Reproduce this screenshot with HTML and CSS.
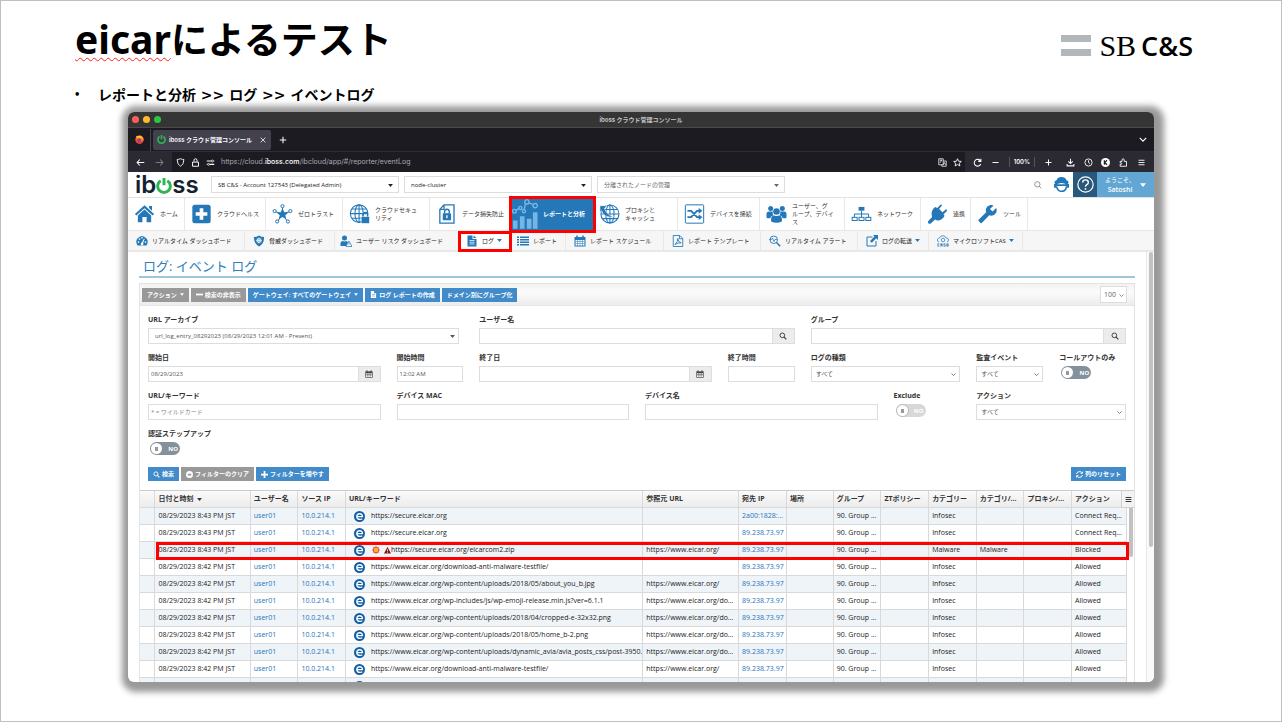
FILE: index.html
```html
<!DOCTYPE html>
<html lang="ja">
<head>
<meta charset="utf-8">
<title>eicarによるテスト</title>
<link rel="stylesheet" href="styles.css">
</head>
<body>
<svg class="sprite" aria-hidden="true">
  <symbol id="home" viewBox="0 0 24 24"><path d="M12 1.500 23.500 12l-1.700 1.900L12 5 2.200 13.900.5 12z"/><path d="M17.500 2.500H21V8l-3.500-3.200zM12 6.600l8 7.200V22h-5.500v-6.500h-5V22H4v-8.200z"/></symbol>
  <symbol id="plus-box" viewBox="0 0 24 24"><rect x="1" y="1" width="22" height="22" rx="3"/><path d="M9.800 5h4.400v4.800H19v4.400h-4.800V19H9.800v-4.800H5V9.800h4.800z" fill="#fff"/></symbol>
  <symbol id="hub" viewBox="0 0 24 24"><path d="M12 4v8M3 9l9 3 9-3M6 21l6-9 6 9" stroke="currentColor" fill="none" stroke-width="1.200"/><path d="m12 5 2.200 4.800 5 .4-3.900 3.300 1.400 5-4.700-2.800-4.700 2.800 1.400-5-3.900-3.300 5-.4z"/><g fill="#fff" stroke="currentColor" stroke-width="1.200"><circle cx="12" cy="2.600" r="1.900"/><circle cx="2.600" cy="8.500" r="1.900"/><circle cx="21.400" cy="8.500" r="1.900"/><circle cx="5.600" cy="21" r="1.900"/><circle cx="18.400" cy="21" r="1.900"/></g></symbol>
  <symbol id="globe-lock" viewBox="0 0 24 24"><g fill="none" stroke="currentColor" stroke-width="1.300"><circle cx="11.500" cy="11.500" r="10.500"/><ellipse cx="11.500" cy="11.500" rx="5" ry="10.500"/><path d="M11.500 1v21M1 11.500h21M2.800 6h17.400M2.800 17h17.400"/></g><rect x="14" y="15" width="10" height="8.500" rx="1" stroke="#fff" stroke-width=".8"/><path d="M16.200 15v-2a2.800 2.800 0 0 1 5.600 0v2" fill="none" stroke="currentColor" stroke-width="1.600"/></symbol>
  <symbol id="doc-lock" viewBox="0 0 24 24"><path d="M9 1h12v22H4V6.500zM9 1v5.500H4" fill="none" stroke="currentColor" stroke-width="1.600"/><rect x="7.500" y="11" width="10" height="8.500" rx="1"/><path d="M9.700 11.500V9a2.800 2.800 0 0 1 5.600 0v2.500" fill="none" stroke="currentColor" stroke-width="1.700"/><rect x="11.700" y="13.500" width="1.600" height="3.500" fill="#fff"/></symbol>
  <symbol id="chart" viewBox="0 0 28 32"><path d="M1 23h5v9H1zM8.500 18.500h5V32h-5zM16 21h5v11h-5zM22.500 14h5v18h-5z"/><g fill="none" stroke="currentColor" stroke-width="1.500"><path d="m4 12 3.700-2M14.500 5l-1.500 6.500M18 4l5 2"/><circle cx="2.500" cy="13" r="2"/><circle cx="9" cy="9.500" r="1.700"/><circle cx="12.800" cy="13" r="1.700"/><circle cx="16" cy="3" r="2.300"/><circle cx="25" cy="7" r="2.300"/></g></symbol>
  <symbol id="globe-arrow" viewBox="0 0 24 24"><g fill="none" stroke="currentColor" stroke-width="1.300"><circle cx="12.500" cy="12" r="10.800"/><ellipse cx="12.500" cy="12" rx="5" ry="10.800"/><path d="M12.500 1v22M2 12h21.500M4 6.500h17.500M4 17.500h17.500"/></g><path d="M.5 2h8.500L6 5.500C8 11 12 14 17 15.500 9 16.500 4 13.500 2.800 8L.5 10z" stroke="#fff" stroke-width=".7"/></symbol>
  <symbol id="shuffle" viewBox="0 0 24 24"><rect x="1" y="1" width="22" height="22" rx="1" fill="none" stroke="currentColor" stroke-width="1.200"/><path d="M3.500 8.200H8l7 7.600h3M3.500 15.800H8l7-7.600h3" fill="none" stroke="currentColor" stroke-width="2.200"/><path d="m17 4.800 4.500 3.400L17 11.600zM17 12.400l4.500 3.400-4.500 3.400z"/></symbol>
  <symbol id="users" viewBox="0 0 24 24"><circle cx="5" cy="5.500" r="3"/><circle cx="19" cy="5.500" r="3"/><circle cx="12" cy="9" r="4"/><path d="M0 16v-4q0-3 3-3h4.500q-.5 3 1 4.500Q5 14 4.500 17H1q-1 0-1-1zM24 16v-4q0-3-3-3h-4.500q.5 3-1 4.500 3.500.5 4 3.500H23q1 0 1-1zM5.500 21v-3q0-4 4-4.300Q12 15.300 14.500 13.700q4 .3 4 4.300v3q-6.500 3-13 0z"/></symbol>
  <symbol id="network" viewBox="0 0 24 24"><rect x="8.500" y="3.500" width="7" height="4.500"/><path d="M12 8v8M3.500 16v-4h17v4" fill="none" stroke="currentColor" stroke-width="1.200"/><g fill="#fff" stroke="currentColor" stroke-width="1.200"><rect x=".8" y="16" width="6" height="3.800"/><rect x="9" y="16" width="6" height="3.800"/><rect x="17.200" y="16" width="6" height="3.800"/></g></symbol>
  <symbol id="plug" viewBox="0 0 24 24"><path d="m8 4.500 2-1 1.500 1.500L15.500.8q1.500-.6 2 .8L14 6l4 4 4.300-3.600q1.600.4 1 2L19.200 12.500l1.300 1.500-1 2-3 2.500q-4 2.500-7.500 0L4 23.300q-2 .7-3.200-.3-.6-1.300.2-2.600l4.500-4.900Q3.500 9 8 4.500z"/></symbol>
  <symbol id="wrench" viewBox="0 0 24 24"><path transform="matrix(-1 0 0 1 24 0)" d="M22.700 19l-9.100-9.100c.9-2.300.4-5-1.500-6.900-2-2-5-2.400-7.400-1.300L9 6 6 9 1.600 4.700C.4 7.100.9 10.100 2.900 12.100c1.900 1.900 4.600 2.400 6.900 1.500l9.100 9.100c.4.4 1 .4 1.400 0l2.300-2.300c.5-.4.5-1.100.1-1.400z"/></symbol>
  <symbol id="gauge" viewBox="0 0 24 24"><path d="M3 21Q-2 13 3 7q4-5 9-5t9 5q5 6 0 14z"/><g fill="#fff"><circle cx="5" cy="14" r="1.700"/><circle cx="7" cy="8" r="1.700"/><circle cx="12" cy="5.500" r="1.700"/><circle cx="19" cy="14" r="1.700"/><path d="m16 7 1.500.7-3.300 8.300a2.700 2.700 0 1 1-2.500-.8z"/></g></symbol>
  <symbol id="shield" viewBox="0 0 24 24"><path d="M12 1q5 3 10 3 1 13-10 19Q1 17 2 4q5 0 10-3z"/><circle cx="12" cy="11" r="4" fill="none" stroke="#fff" stroke-width="1.600"/><path d="M12 5v12M6 11h12M8 7l8 8M16 7l-8 8" stroke="#fff" stroke-width="1.200"/></symbol>
  <symbol id="user-warn" viewBox="0 0 24 24"><circle cx="9" cy="6" r="5"/><path d="M1 22v-5q0-5 5-5 3 2 6 0 3 0 4 3l-4 7z"/><path d="m18 12 6 11H12z" fill="#fff" stroke="currentColor" stroke-width="1.500"/><path d="M17.300 15.500h1.400v4h-1.400z"/></symbol>
  <symbol id="doc" viewBox="0 0 24 24"><path d="M3 1h10v7h8v15H3z"/><path d="M15 1v5h6z"/><path d="M7 11h10M7 14.500h10M7 18h10" stroke="#fff" stroke-width="1.500"/></symbol>
  <symbol id="list" viewBox="0 0 24 24"><path d="M0 3h4v3H0zM6 3h18v3H6zM0 8h4v3H0zM6 8h18v3H6zM0 13h4v3H0zM6 13h18v3H6zM0 18h4v3H0zM6 18h18v3H6z"/></symbol>
  <symbol id="cal" viewBox="0 0 24 24"><path d="M1 4h22v19H1z"/><path d="M6 1v6M18 1v6" stroke="currentColor" stroke-width="3"/><path d="M3 10h4v3H3zM8 10h3.500v3H8zM12.500 10H16v3h-3.500zM17 10h4v3h-4zM3 14h4v3H3zM8 14h3.500v3H8zM12.500 14H16v3h-3.500zM17 14h4v3h-4zM3 18h4v3H3zM8 18h3.500v3H8zM12.500 18H16v3h-3.500zM17 18h4v3h-4z" fill="#fff"/></symbol>
  <symbol id="pdf" viewBox="0 0 24 24"><path d="M2.500 1h13l6 6v16h-19zM15 1v6.500h6.500M6 19q6-5 5.500-12 1 8 7 8.500-6-.5-12.500 3.500" fill="none" stroke="currentColor" stroke-width="1.700"/></symbol>
  <symbol id="find" viewBox="0 0 24 24"><circle cx="9.500" cy="9.500" r="7.500" fill="none" stroke="currentColor" stroke-width="1.800"/><path d="m15 15 7.500 7.500" stroke="currentColor" stroke-width="3"/><path d="M0 9h5l2-3 3 7 2-4h4" fill="none" stroke="currentColor" stroke-width="1.500"/></symbol>
  <symbol id="export" viewBox="0 0 24 24"><path d="M13 4H2v18h18V12" fill="none" stroke="currentColor" stroke-width="2"/><path d="M14 0h10v10l-3.500-3.500-9 9L8 12l9-9z"/></symbol>
  <symbol id="casb" viewBox="0 0 24 24"><path d="M4 14q-4-1-3-5 1-3 4-3 2-5 7-4.500Q17 1.500 18 6q5 0 5 4 0 3-3 4" fill="none" stroke="currentColor" stroke-width="1.500"/><circle cx="12" cy="10" r="3.500" fill="none" stroke="currentColor" stroke-width="1.500"/><path d="M1 17h4v1.500H2.500v3H5V23H1zM7 17h4v6H9.500v-2h-1v2H7zM13 17h4v1.500h-2.500v1H17V23h-4v-1.500h2.500v-1H13zM19 17h4v6h-4zM20.500 18.300v1h1v-1zM20.500 20.500v1h1v-1z" fill-rule="evenodd"/></symbol>
  <symbol id="search" viewBox="0 0 24 24"><circle cx="10" cy="10" r="7" fill="none" stroke="currentColor" stroke-width="3"/><path d="m15 15 7 7" stroke="currentColor" stroke-width="3.500"/></symbol>
  <symbol id="caret" viewBox="0 0 8 5"><path d="M0 0h8L4 5z"/></symbol>
  <symbol id="chev" viewBox="0 0 10 6"><path d="m1 1 4 4 4-4" fill="none" stroke="currentColor" stroke-width="1.500"/></symbol>
  <symbol id="power" viewBox="0 0 24 24"><path d="M7 4.200a9.500 9.500 0 1 0 10 0M12 0v11" fill="none" stroke="currentColor" stroke-width="4.400"/></symbol>
  <symbol id="edge" viewBox="0 0 24 24"><circle cx="12" cy="12" r="12" fill="#0f5ea5"/><path d="M6 12.500h12.500Q18.500 6 12.300 6 6 6 6 12.500 6.500 18.500 13 18.500q3 0 5-1.500" fill="none" stroke="#fff" stroke-width="2.800"/></symbol>
  <symbol id="agent" viewBox="0 0 24 24"><path d="M1 10q-1-4 3-5 2-5 8-5t8 5q4 1 3 5l-2 2q-9-5-18 0z"/><path d="M4 13h16q-1-6-8-6.500Q5 7 4 13zm0 2q2 8 8 8 7 0 8-8" fill="none" stroke="currentColor" stroke-width="2.500"/><path d="M0 11h4v6H0zM20 11h4v6h-4z"/></symbol>
</svg>

<main class="slide">
  <header class="slide-head">
    <h1 class="title"><span class="misspelt">eicar</span>によるテスト</h1>
    <div class="brand"><span class="brand-bars"></span><span class="brand-serif">SB</span><span class="brand-sans">C&amp;S</span></div>
  </header>
  <ul class="points"><li>レポートと分析 &gt;&gt; ログ &gt;&gt; イベントログ</li></ul>

  <section class="window">
    <div class="titlebar"><span class="dots"><i class="dot red"></i><i class="dot amber"></i><i class="dot green"></i></span><span>iboss クラウド管理コンソール</span></div>
    <div class="tabs">
      <span class="fox"><svg viewBox="0 0 24 24"><circle cx="12" cy="12.500" r="11" fill="#ff7a1a"/><path d="M2 6q3-5 4-4 5 1 7-1 9 4 10 12-4-6-9-6z" fill="#ffca28"/><path d="M3 16q4 8 12 7 7-2 8-9-5 5-8 3 0-7-6-8-6 1-6 7z" fill="#e8304a"/><circle cx="12" cy="13" r="4" fill="#7541c9"/></svg></span>
      <div class="tab"><svg class="tab-icon"><use href="#power"/></svg><span>iboss クラウド管理コンソール</span><button class="bare" aria-label="閉じる"><svg viewBox="0 0 10 10"><path d="m2 2 6 6M8 2 2 8" stroke="currentColor"/></svg></button></div>
      <button class="bare new-tab" aria-label="新しいタブ"><svg viewBox="0 0 10 10"><path d="M5 1v8M1 5h8" stroke="currentColor" stroke-width="1.300"/></svg></button>
      <button class="bare tab-list" aria-label="タブ一覧"><svg><use href="#chev"/></svg></button>
    </div>
    <div class="toolbar">
      <div class="back"><button class="bare" aria-label="戻る"><svg viewBox="0 0 12 12"><path d="M11 6H1.500M5 2 1.500 6 5 10" fill="none" stroke="currentColor" stroke-width="1.400"/></svg></button><button class="bare dim" aria-label="進む"><svg viewBox="0 0 12 12"><path d="M1 6h9.500M7 2l3.500 4L7 10" fill="none" stroke="currentColor" stroke-width="1.400"/></svg></button></div>
      <div class="urlbar">
        <svg viewBox="0 0 12 12"><path d="M6 1q2.500 1 4.500 1 0 7-4.500 9-4.500-2-4.500-9 2 0 4.500-1z" fill="none" stroke="currentColor" stroke-width="1.200"/></svg>
        <svg viewBox="0 0 12 12"><path d="M2 5.500h8v5.500H2zM4 5V3q0-2 2-2t2 2v2" fill="none" stroke="currentColor" stroke-width="1.300"/></svg>
        <svg viewBox="0 0 12 12"><path d="M1 4h6M5 8.500h6M1 8.500h1M10 4h1" stroke="currentColor" stroke-width="1.400"/><circle cx="8.500" cy="4" r="1.300" fill="none" stroke="currentColor"/><circle cx="3.500" cy="8.500" r="1.300" fill="none" stroke="currentColor"/></svg>
        <span class="url">https://cloud.<b>iboss.com</b>/ibcloud/app/#/reporter/eventLog</span>
        <svg viewBox="0 0 12 12"><path d="M1 1h6v8H1zM2.500 3h3M4 2v1M2.500 6.500 5 3M7 4h4v7H5V9M7 9l1.500-3L10 9" fill="none" stroke="currentColor"/></svg>
        <svg viewBox="0 0 12 12"><path d="m6 1 1.500 3.300 3.600.3-2.700 2.400.8 3.600L6 8.700l-3.200 1.900.8-3.600L.9 4.600l3.600-.3z" fill="none" stroke="currentColor" stroke-width="1.200"/></svg>
      </div>
      <div class="tools">
        <svg viewBox="0 0 12 12"><path d="M10 4A4.500 4.500 0 1 0 10.300 8M10.500 1v3.500H7" fill="none" stroke="currentColor" stroke-width="1.400"/></svg>
        <svg viewBox="0 0 12 12"><path d="M2 6h8" stroke="currentColor" stroke-width="1.400"/></svg>
        <span class="zoom">100%</span>
        <svg viewBox="0 0 12 12"><path d="M2 6h8M6 2v8" stroke="currentColor" stroke-width="1.400"/></svg>
        <svg class="gap-left" viewBox="0 0 12 12"><path d="M6 1v6M3 4.500l3 3 3-3M1.500 8v2.500h9V8" fill="none" stroke="currentColor" stroke-width="1.400"/></svg>
        <svg viewBox="0 0 12 12"><circle cx="6" cy="6" r="4.800" fill="none" stroke="currentColor" stroke-width="1.200"/><path d="M6 3v3l2 1.500" fill="none" stroke="currentColor" stroke-width="1.200"/></svg>
        <svg viewBox="0 0 12 12"><circle cx="6" cy="6" r="6" fill="#fff"/><path d="M4.500 3v6M8 3 5 6l3 3" fill="none" stroke="#222" stroke-width="1.600"/></svg>
        <svg viewBox="0 0 12 12"><path d="M1.500 11V8.500q2 .5 2-1t-2-1V4.500H4Q3.500 1 5.500 1t1.500 3.500h3V11z" fill="none" stroke="currentColor" stroke-width="1.200"/></svg>
        <svg viewBox="0 0 12 12"><path d="M2 3h8M2 6h8M2 9h8" stroke="currentColor" stroke-width="1.200"/></svg>
      </div>
    </div>

    <div class="app-head">
      <div class="logo"><span>ib</span><svg><use href="#power"/></svg><span>ss</span></div>
      <div class="pick"><select aria-label="アカウント"><option>SB C&amp;S - Account 127543 (Delegated Admin)</option></select><svg><use href="#caret"/></svg></div>
      <div class="pick"><select aria-label="ノード"><option>node-cluster</option></select><svg><use href="#caret"/></svg></div>
      <div class="pick pale"><select aria-label="分離ノード"><option>分離されたノードの管理</option></select><svg><use href="#caret"/></svg></div>
      <div class="head-right">
        <svg class="head-search" viewBox="0 0 12 12"><circle cx="5" cy="5" r="4" fill="none" stroke="#666"/><path d="m8 8 3 3" stroke="#666"/></svg>
        <svg class="agent"><use href="#agent"/></svg>
        <button class="help" aria-label="ヘルプ"><svg viewBox="0 0 24 24"><circle cx="12" cy="12" r="10.800" fill="none" stroke="#fff" stroke-width="1.700"/><path d="M8 9.300Q8 5.500 12 5.500t4 3.500q0 2-2.200 3.200Q12 13.200 12 15.200" fill="none" stroke="#fff" stroke-width="2"/><circle cx="12" cy="18.200" r="1.300" fill="#fff"/></svg></button>
        <button class="welcome"><span>ようこそ、<br><em>Satoshi</em></span><svg><use href="#caret"/></svg></button>
      </div>
    </div>

    <nav class="nav">
      <a href="#"><svg><use href="#home"/></svg><span>ホーム</span></a>
      <a href="#"><svg><use href="#plus-box"/></svg><span>クラウドヘルス</span></a>
      <a href="#"><svg><use href="#hub"/></svg><span>ゼロトラスト</span></a>
      <a href="#"><svg><use href="#globe-lock"/></svg><span>クラウドセキュ<br>リティ</span></a>
      <a href="#" class="no-rule"><svg><use href="#doc-lock"/></svg><span>データ損失防止</span></a>
      <a href="#" class="current"><svg><use href="#chart"/></svg><span>レポートと分析</span></a>
      <a href="#" class="snug"><svg><use href="#globe-arrow"/></svg><span>プロキシと<br>キャッシュ</span></a>
      <a href="#"><svg><use href="#shuffle"/></svg><span>デバイスを接続</span></a>
      <a href="#"><svg><use href="#users"/></svg><span>ユーザー、グ<br>ループ、デバイ<br>ス</span></a>
      <a href="#"><svg><use href="#network"/></svg><span>ネットワーク</span></a>
      <a href="#"><svg><use href="#plug"/></svg><span>連携</span></a>
      <a href="#"><svg><use href="#wrench"/></svg><span>ツール</span></a>
    </nav>
    <nav class="subnav">
      <a href="#"><svg><use href="#gauge"/></svg><span>リアルタイム ダッシュボード</span></a>
      <a href="#"><svg><use href="#shield"/></svg><span>脅威ダッシュボード</span></a>
      <a href="#" class="no-rule snug"><svg><use href="#user-warn"/></svg><span>ユーザー リスク ダッシュボード</span></a>
      <a href="#" class="marked"><svg><use href="#doc"/></svg><span>ログ</span><svg class="mini"><use href="#caret"/></svg></a>
      <a href="#" class="snug"><svg><use href="#list"/></svg><span>レポート</span></a>
      <a href="#"><svg><use href="#cal"/></svg><span>レポート スケジュール</span></a>
      <a href="#"><svg><use href="#pdf"/></svg><span>レポート テンプレート</span></a>
      <a href="#"><svg><use href="#find"/></svg><span>リアルタイム アラート</span></a>
      <a href="#"><svg><use href="#export"/></svg><span>ログの転送</span><svg class="mini"><use href="#caret"/></svg></a>
      <a href="#"><svg><use href="#casb"/></svg><span>マイクロソフトCAS</span><svg class="mini"><use href="#caret"/></svg></a>
    </nav>

    <div class="view">
      <div class="content">
        <h2 class="page-title">ログ: イベント ログ</h2>
        <div class="panel">
          <div class="panel-bar">
            <button class="btn grey">アクション <svg class="tiny"><use href="#caret"/></svg></button>
            <button class="btn grey"><svg viewBox="0 0 8 8"><path d="M0 3h8v2H0z"/></svg>検索の非表示</button>
            <button class="btn">ゲートウェイ: すべてのゲートウェイ <svg class="tiny"><use href="#caret"/></svg></button>
            <button class="btn"><svg viewBox="0 0 24 24"><path fill-rule="evenodd" d="M3 0h11v8h7v16H3zM7 11v2h10v-2zm0 5v2h10v-2z"/></svg>ログ レポートの作成</button>
            <button class="btn">ドメイン別にグループ化</button>
            <div class="page-size"><select aria-label="件数"><option>100</option></select><svg><use href="#chev"/></svg></div>
          </div>
          <form class="filters">
            <div class="field w4"><label for="archive">URL アーカイブ</label><div class="box"><select id="archive"><option>url_log_entry_08292023 (08/29/2023 12:01 AM - Present)</option></select><svg><use href="#caret"/></svg></div></div>
            <div class="field w4"><label for="user">ユーザー名</label><div class="group"><input id="user" type="text"><button type="button" aria-label="ユーザーを検索"><svg><use href="#search"/></svg></button></div></div>
            <div class="field w4"><label for="grp">グループ</label><div class="group"><input id="grp" type="text"><button type="button" aria-label="グループを検索"><svg><use href="#search"/></svg></button></div></div>

            <div class="field w3"><label for="sd">開始日</label><div class="group"><input id="sd" type="text" value="08/29/2023"><button type="button" aria-label="開始日を選択"><svg><use href="#cal"/></svg></button></div></div>
            <div class="field"><label for="st">開始時間</label><input id="st" type="text" value="12:02 AM"></div>
            <div class="field w3"><label for="ed">終了日</label><div class="group"><input id="ed" type="text"><button type="button" aria-label="終了日を選択"><svg><use href="#cal"/></svg></button></div></div>
            <div class="field"><label for="et">終了時間</label><input id="et" type="text"></div>
            <div class="field w2"><label for="kind">ログの種類</label><div class="box"><select id="kind"><option>すべて</option></select><svg><use href="#chev"/></svg></div></div>
            <div class="field"><label for="audit">監査イベント</label><div class="box"><select id="audit"><option>すべて</option></select><svg><use href="#chev"/></svg></div></div>
            <div class="field"><label for="callout">コールアウトのみ</label><span class="switch"><input id="callout" type="checkbox"><span>NO</span></span></div>

            <div class="field w3"><label for="kw">URL/キーワード</label><input id="kw" type="text" placeholder="* = ワイルドカード"></div>
            <div class="field w3"><label for="mac">デバイス MAC</label><input id="mac" type="text"></div>
            <div class="field w3"><label for="dev">デバイス名</label><input id="dev" type="text"></div>
            <div class="field"><label for="excl">Exclude</label><span class="switch off"><input id="excl" type="checkbox" disabled><span>NO</span></span></div>
            <div class="field w2"><label for="act">アクション</label><div class="box"><select id="act"><option>すべて</option></select><svg><use href="#chev"/></svg></div></div>

            <div class="field w2"><label for="step">認証ステップアップ</label><span class="switch"><input id="step" type="checkbox"><span>NO</span></span></div>
          </form>
          <div class="actions">
            <button class="btn"><svg><use href="#search"/></svg>検索</button>
            <button class="btn grey"><svg viewBox="0 0 8 8"><path fill-rule="evenodd" d="M4 0a4 4 0 1 1 0 8 4 4 0 0 1 0-8zM2 3v2h4V3z"/></svg>フィルターのクリア</button>
            <button class="btn"><svg viewBox="0 0 8 8"><path d="M3 0h2v3h3v2H5v3H3V5H0V3h3z"/></svg>フィルターを増やす</button>
            <button class="btn last"><svg viewBox="0 0 12 12"><path d="M1 5q1-4 5-4 3 0 4 2M11 1v3H8M11 7q-1 4-5 4-3 0-4-2M1 11V8h3" fill="none" stroke="currentColor" stroke-width="1.700"/></svg>列のリセット</button>
          </div>
          <div class="grid-wrap">
            <table class="grid">
              <colgroup><col class="c-sel"><col class="c-date"><col class="c-s"><col class="c-s"><col><col class="c-date"><col class="c-s"><col class="c-s"><col class="c-s"><col class="c-s"><col class="c-s"><col class="c-s"><col class="c-s"><col class="c-act"></colgroup>
              <thead><tr><th></th><th>日付と時刻 <svg class="sort"><use href="#caret"/></svg></th><th>ユーザー名</th><th>ソース IP</th><th>URL/キーワード</th><th>参照元 URL</th><th>宛先 IP</th><th>場所</th><th>グループ</th><th>ZTポリシー</th><th>カテゴリー</th><th>カテゴリ/...</th><th>プロキシ/...</th><th>アクション</th></tr></thead>
              <tbody>
                <tr><td></td><td>08/29/2023 8:43 PM JST</td><td><a href="#">user01</a></td><td><a href="#">10.0.214.1</a></td><td class="link"><svg><use href="#edge"/></svg>https://secure.eicar.org</td><td></td><td><a href="#">2a00:1828:...</a></td><td></td><td>90. Group ...</td><td></td><td>Infosec</td><td></td><td></td><td>Connect Req...</td></tr>
                <tr><td></td><td>08/29/2023 8:43 PM JST</td><td><a href="#">user01</a></td><td><a href="#">10.0.214.1</a></td><td class="link"><svg><use href="#edge"/></svg>https://secure.eicar.org</td><td></td><td><a href="#">89.238.73.97</a></td><td></td><td>90. Group ...</td><td></td><td>Infosec</td><td></td><td></td><td>Connect Req...</td></tr>
                <tr class="hit"><td></td><td>08/29/2023 8:43 PM JST</td><td><a href="#">user01</a></td><td><a href="#">10.0.214.1</a></td><td class="link"><svg><use href="#edge"/></svg><svg class="burst" viewBox="0 0 12 12"><path d="m6 0 1.500 2 2.700-.3L10 4.500 12 6l-2 1.500.2 2.800-2.700-.3L6 12l-1.500-2-2.700.3L2 7.500 0 6l2-1.500-.2-2.800 2.700.3z" fill="#e8302a"/><circle cx="6" cy="6" r="3.600" fill="#ffb020"/></svg><svg class="warn" viewBox="0 0 12 12"><path d="m6 0 6 11H0z" fill="#8b0f0f"/><path d="M5.400 4h1.200v3.500H5.400zM5.400 8.500h1.200v1.200H5.400z" fill="#fff"/></svg>https://secure.eicar.org/eicarcom2.zip</td><td>https://www.eicar.org/</td><td><a href="#">89.238.73.97</a></td><td></td><td>90. Group ...</td><td></td><td>Malware</td><td>Malware</td><td></td><td>Blocked</td></tr>
                <tr><td></td><td>08/29/2023 8:42 PM JST</td><td><a href="#">user01</a></td><td><a href="#">10.0.214.1</a></td><td class="link"><svg><use href="#edge"/></svg>https://www.eicar.org/download-anti-malware-testfile/</td><td></td><td><a href="#">89.238.73.97</a></td><td></td><td>90. Group ...</td><td></td><td>Infosec</td><td></td><td></td><td>Allowed</td></tr>
                <tr><td></td><td>08/29/2023 8:42 PM JST</td><td><a href="#">user01</a></td><td><a href="#">10.0.214.1</a></td><td class="link"><svg><use href="#edge"/></svg>https://www.eicar.org/wp-content/uploads/2018/05/about_you_b.jpg</td><td>https://www.eicar.org/</td><td><a href="#">89.238.73.97</a></td><td></td><td>90. Group ...</td><td></td><td>Infosec</td><td></td><td></td><td>Allowed</td></tr>
                <tr><td></td><td>08/29/2023 8:42 PM JST</td><td><a href="#">user01</a></td><td><a href="#">10.0.214.1</a></td><td class="link"><svg><use href="#edge"/></svg>https://www.eicar.org/wp-includes/js/wp-emoji-release.min.js?ver=6.1.1</td><td>https://www.eicar.org/do...</td><td><a href="#">89.238.73.97</a></td><td></td><td>90. Group ...</td><td></td><td>Infosec</td><td></td><td></td><td>Allowed</td></tr>
                <tr><td></td><td>08/29/2023 8:42 PM JST</td><td><a href="#">user01</a></td><td><a href="#">10.0.214.1</a></td><td class="link"><svg><use href="#edge"/></svg>https://www.eicar.org/wp-content/uploads/2018/04/cropped-e-32x32.png</td><td>https://www.eicar.org/do...</td><td><a href="#">89.238.73.97</a></td><td></td><td>90. Group ...</td><td></td><td>Infosec</td><td></td><td></td><td>Allowed</td></tr>
                <tr><td></td><td>08/29/2023 8:42 PM JST</td><td><a href="#">user01</a></td><td><a href="#">10.0.214.1</a></td><td class="link"><svg><use href="#edge"/></svg>https://www.eicar.org/wp-content/uploads/2018/05/home_b-2.png</td><td>https://www.eicar.org/do...</td><td><a href="#">89.238.73.97</a></td><td></td><td>90. Group ...</td><td></td><td>Infosec</td><td></td><td></td><td>Allowed</td></tr>
                <tr><td></td><td>08/29/2023 8:42 PM JST</td><td><a href="#">user01</a></td><td><a href="#">10.0.214.1</a></td><td class="link"><svg><use href="#edge"/></svg>https://www.eicar.org/wp-content/uploads/dynamic_avia/avia_posts_css/post-3950.</td><td>https://www.eicar.org/do...</td><td><a href="#">89.238.73.97</a></td><td></td><td>90. Group ...</td><td></td><td>Infosec</td><td></td><td></td><td>Allowed</td></tr>
                <tr><td></td><td>08/29/2023 8:42 PM JST</td><td><a href="#">user01</a></td><td><a href="#">10.0.214.1</a></td><td class="link"><svg><use href="#edge"/></svg>https://www.eicar.org/download-anti-malware-testfile/</td><td>https://www.eicar.org/</td><td><a href="#">89.238.73.97</a></td><td></td><td>90. Group ...</td><td></td><td>Infosec</td><td></td><td></td><td>Allowed</td></tr>
                <tr><td></td><td></td><td></td><td></td><td class="link"><svg><use href="#edge"/></svg></td><td></td><td></td><td></td><td></td><td></td><td></td><td></td><td></td><td></td></tr>
              </tbody>
            </table>
            <div class="grid-side"><button class="menu" aria-label="列メニュー"><svg viewBox="0 0 12 12"><path d="M1 2.500h10M1 6h10M1 9.500h10" stroke="currentColor" stroke-width="1.800"/></svg></button><span class="thumb"></span></div>
          </div>
        </div>
      </div>
      <div class="scroll"><span class="scroll-thumb"></span></div>
    </div>
  </section>
</main>
</body>
</html>
```
FILE: styles.css
```css
* { box-sizing: border-box; }
body { margin: 0; background: #fff; color: #000; font-family: "Open Sans", "Noto Sans CJK JP", sans-serif; }
svg { display: block; flex: none; fill: currentColor; }
button, input, select { font: inherit; color: inherit; border-radius: 0; margin: 0; }
a { color: inherit; text-decoration: none; }
.sprite { position: absolute; width: 0; height: 0; }

/* slide */
.slide { height: 100vh; min-height: 560px; display: flex; flex-direction: column; border: 1px solid #bfbfbf; overflow: hidden; }
.slide-head { display: flex; justify-content: space-between; align-items: center; padding: 9px 88px 0 74px; }
.title { margin: 0; font-size: 37px; line-height: 56px; font-weight: 700; font-family: "Noto Sans CJK JP", sans-serif; }
.misspelt { font-family: "Noto Sans", sans-serif; font-size: 39px; text-decoration: underline wavy #f22 1px; text-underline-offset: 3px; text-decoration-skip-ink: none; }
.brand { display: flex; align-items: center; line-height: 32px; padding-top: 14px; }
.brand-bars { width: 30px; height: 21px; border: solid #b1b7ba; border-width: 7px 0; margin-right: 8px; }
.brand-serif { font-family: "Liberation Serif", serif; font-size: 30px; margin-right: 5px; }
.brand-sans { font-size: 27px; font-weight: 600; }
.points { margin: 0; padding: 18px 0 0 97px; list-style: none; font: 700 14px/20px "DejaVu Sans", "Noto Sans CJK JP", sans-serif; }
.points li { display: flex; }
.points li::before { content: "•"; width: 24px; margin-left: -24px; font-size: 10px; }

/* browser window */
.window { flex: 1; min-height: 0; margin: 7px 127px 39px; display: flex; flex-direction: column; overflow: hidden; border-radius: 6px; background: #fff; box-shadow: 2px 2px 6px 8px #999; }
.window > * { flex: none; }
.titlebar { position: relative; height: 15px; display: flex; align-items: center; justify-content: center; background: #353535; color: #c4c4c4; font: 700 6px/10px Inter, "Noto Sans CJK JP", sans-serif; }
.dots { position: absolute; left: 4px; display: flex; gap: 4px; }
.dot { width: 7px; height: 7px; border-radius: 50%; }
.red { background: #ff5f57; }
.amber { background: #febc2e; }
.green { background: #28c840; }
.bare { border: 0; padding: 0; background: none; color: #fbfbfe; }
.bare svg { width: 8px; height: 8px; }
.tabs { height: 25px; display: flex; align-items: center; background: #1c1b22; border-top: 1px solid #4a4a4a; border-bottom: 1px solid #2f2e38; color: #fbfbfe; font: 600 6px/10px Inter, "Noto Sans CJK JP", sans-serif; }
.fox { width: 23px; height: 22px; border-right: 1px solid #45444e; display: flex; align-items: center; justify-content: center; }
.fox svg { width: 9px; height: 9px; }
.tab { width: 118px; height: 20px; margin-left: 2px; padding: 0 4px; display: flex; align-items: center; gap: 3px; background: #42414d; border-radius: 2px; white-space: nowrap; }
.tab .bare { margin-left: auto; }
.tab-icon { width: 9px; height: 9px; color: #2db553; }
.new-tab { margin-left: 8px; }
.tab-list { margin-left: auto; margin-right: 7px; }
.tab-list svg { height: 5px; }
.toolbar { height: 20px; display: flex; background: #2b2a33; color: #fbfbfe; font: 400 7px/10px Inter, sans-serif; }
.toolbar svg { width: 9px; height: 9px; }
.back { width: 44px; display: flex; align-items: center; gap: 10px; padding-left: 8px; }
.dim { color: #7c7b85; }
.urlbar { flex: 1; display: flex; align-items: center; gap: 6px; padding: 0 3px 0 4px; background: #1c1b22; }
.url { flex: 1; color: #a9a9b0; }
.url b { color: #fff; font-weight: 500; }
.tools { width: 189px; display: flex; align-items: center; justify-content: space-between; padding: 0 8px; }
.zoom { font-size: 6px; font-weight: 600; border: solid #55545e; border-width: 0 1px; padding: 0 4px; }
.gap-left { margin-left: 4px; }

/* application header */
.app-head { height: 25px; display: flex; align-items: center; gap: 5px; padding-left: 7px; }
.logo { width: 71px; display: flex; align-items: center; color: #14222f; font: 600 24px/24px Inter, sans-serif; }
.logo svg { width: 16px; height: 16px; color: #2db553; margin-top: 3px; }
.pick, .box, .page-size { position: relative; }
select { appearance: none; width: 100%; display: block; border: 1px solid #ddd; background: #fff; outline: 0; }
.pick { width: 188px; font-size: 6px; color: #222; }
.pale { color: #666; }
.pick select { height: 17px; padding: 0 6px; }
.pick svg, .box svg, .page-size svg { position: absolute; right: 6px; top: 50%; width: 5px; height: 3px; margin-top: -1px; pointer-events: none; }
.head-right { flex: 1; align-self: stretch; display: flex; align-items: center; justify-content: flex-end; }
.head-search { width: 8px; height: 8px; margin-right: 12px; }
.agent { width: 15px; height: 15px; margin-right: 4px; color: #2478b8; }
.help { width: 24px; height: 25px; border: 0; padding: 0; display: grid; place-items: center; background: #28587c; }
.help svg { width: 17px; height: 17px; }
.welcome { width: 57px; height: 25px; border: 0; padding: 0 8px; display: flex; align-items: center; justify-content: space-between; background: #62a6d3; color: #fff; font-size: 6px; line-height: 10px; text-align: center; }
.welcome em { font-style: normal; font-weight: 600; font-size: 7px; }
.welcome svg { width: 6px; height: 4px; }

/* navigation */
.nav { height: 34px; display: grid; grid-template-columns: 57px 81px 77px 87px 79px 87px 82px 82px 85px 76px 50px 57px; border-top: 1px solid #e2e2e2; border-bottom: 1px solid #e6e6e6; font-size: 6px; line-height: 8px; color: #333; white-space: nowrap; }
.nav a, .subnav a { position: relative; display: flex; align-items: center; border-right: 1px solid #e8e8e8; }
.nav a { gap: 5px; padding-left: 6px; }
.nav svg { width: 21px; height: 20px; color: #2478b8; }
.nav .snug { padding-left: 3px; }
.nav .no-rule, .subnav .no-rule { border-right: 0; }
.nav .current { padding-left: 3px; gap: 5px; background: #2478b8; color: #fff; font-weight: 600; border: 0; }
.nav .current svg { width: 26px; height: 30px; color: #75b5e4; }
.nav .current::after, .subnav .marked::after, .hit::after { content: ""; position: absolute; border: 3px solid #f00; z-index: 2; }
.nav .current::after { inset: -2px 0 -3px 0; }
.subnav { height: 21px; display: grid; grid-template-columns: 117px 90px 123px 54px 54px 98px 97px 97px 71px 94px; background: #f6f6f6; border-bottom: 2px solid #e8e8e8; font-size: 6px; line-height: 8px; color: #222; white-space: nowrap; }
.subnav a { gap: 4px; padding-left: 8px; }
.subnav .snug { padding-left: 5px; }
.subnav svg { width: 12px; height: 12px; color: #2478b8; }
.subnav .mini { width: 5px; height: 3px; margin-left: -1px; }
.subnav .marked { background: #fff; border: 0; }
.subnav .marked::after { inset: 0 0 -2px; }

/* page body */
.window > .view { flex: 1; min-height: 0; display: flex; overflow: hidden; }
.content { flex: 1; min-width: 0; padding: 4px 11px 0; }
.page-title { margin: 0 0 5px; padding: 0 4px; font-size: 13px; line-height: 20px; font-weight: 400; color: #2f7eb8; border-bottom: 2px solid #9fc5dd; }
.scroll { width: 8px; border-left: 1px solid #e8e8e8; background: #fafafa; padding-left: 2px; }
.scroll-thumb { display: block; width: 4px; height: 295px; border-radius: 2px; background: #c1c1c1; }
.panel { border: 1px solid #e3e3e3; border-width: 1px 1px 0; }
.panel-bar { height: 22px; display: flex; align-items: center; gap: 2px; padding: 0 7px 0 2px; background: linear-gradient(#f3f3f3, #fbfbfb 40%, #ececec); border-bottom: 1px solid #e6e6e6; }
.btn { height: 14px; border: 0; padding: 0 5px; display: flex; align-items: center; gap: 2px; background: #428bca; color: #fff; font-size: 6px; font-weight: 600; line-height: 10px; white-space: nowrap; }
.btn svg { width: 7px; height: 7px; }
.btn .tiny { width: 4px; height: 3px; margin-left: 1px; }
.grey { background: #999; }
.page-size { width: 27px; margin-left: auto; font-size: 7px; color: #666; }
.page-size select { height: 17px; padding: 0 3px; }
.page-size svg { right: 3px; }
.filters { display: grid; grid-template-columns: repeat(12, 1fr); gap: 9px 16px; padding: 9px 8px 0; font-size: 7px; color: #555; }
.w2 { grid-column: span 2; }
.w3 { grid-column: span 3; }
.w4 { grid-column: span 4; }
.field { min-width: 0; }
.field label { display: block; height: 13px; line-height: 10px; font-weight: 700; color: #333; white-space: nowrap; }
.field input[type="text"], .box select { width: 100%; height: 16px; border: 1px solid #ddd; padding: 0 2px; display: block; background: #fff; outline: 0; font-size: 6px; }
.box select { padding: 0 4px; }
.w4 .box select { padding: 0 6px; }
.w4 .box { margin-right: 4px; }
.box svg { right: 4px; }
.filters ::placeholder { color: #888; opacity: 1; }
.group { display: flex; }
.group input { flex: 1; min-width: 0; }
.group button { width: 22px; height: 16px; border: 1px solid #ddd; border-left: 0; padding: 0; display: grid; place-items: center; background: #ececec; color: #444; }
.group svg { width: 8px; height: 8px; }
.switch { display: flex; align-items: center; justify-content: space-between; width: 30px; height: 13px; margin-left: 2px; padding: 0 2px 0 1px; border-radius: 7px; background: #83919b; color: #fff; font-size: 6px; font-weight: 700; }
.switch input { appearance: none; width: 11px; height: 11px; border-radius: 50%; background: linear-gradient(#999, #999) center / 3px 4px no-repeat #fff; }
.off { background: #d8d8d8; }
.off input { box-shadow: 0 0 0 1px #bbb; }
.actions { display: flex; gap: 2px; padding: 12px 8px 9px; }
.last { margin-left: auto; }

/* log grid */
.grid-wrap { display: flex; border-top: 1px solid #ccc; }
.grid { flex: 1; min-width: 0; table-layout: fixed; border-collapse: separate; border-spacing: 0; font-size: 7px; line-height: 10px; color: #222; }
.c-sel { width: 16px; }
.c-date { width: 96px; }
.c-s { width: 48px; }
.c-act { width: 55px; }
.grid th, .grid td { height: 17px; padding: 0 0 0 3px; border: solid #d9d9d9; border-width: 0 1px 1px 0; text-align: left; white-space: nowrap; overflow: hidden; }
.grid th { background: linear-gradient(#fafafa, #ececec); font-weight: 700; color: #333; }
.grid tbody tr:nth-child(odd) { background: #eff4f8; }
.grid tbody .hit { position: relative; background: #f2dede; }
.hit::after { inset: 0 -2px -1px 16px; }
.grid a { color: #1f73bd; }
.sort { display: inline-block; width: 5px; height: 3px; vertical-align: middle; margin-left: 2px; }
.link svg { display: inline-block; width: 11px; height: 11px; vertical-align: middle; margin: 0 6px 0 5px; }
.link .burst { width: 8px; height: 8px; margin: 0 4px 0 1px; }
.link .warn { width: 7px; height: 7px; margin: 0; }
.grid-side { width: 7px; position: relative; }
.menu { position: absolute; top: 0; right: 0; width: 13px; height: 17px; border: 1px solid #d0d0d0; border-width: 0 0 1px 1px; padding: 0; display: grid; place-items: center; background: #f3f3f3; color: #333; }
.menu svg { width: 7px; height: 7px; }
.thumb { display: block; width: 4px; height: 49px; margin: 17px 0 0 2px; border-radius: 0 0 2px 2px; background: #c1c1c1; }
```
